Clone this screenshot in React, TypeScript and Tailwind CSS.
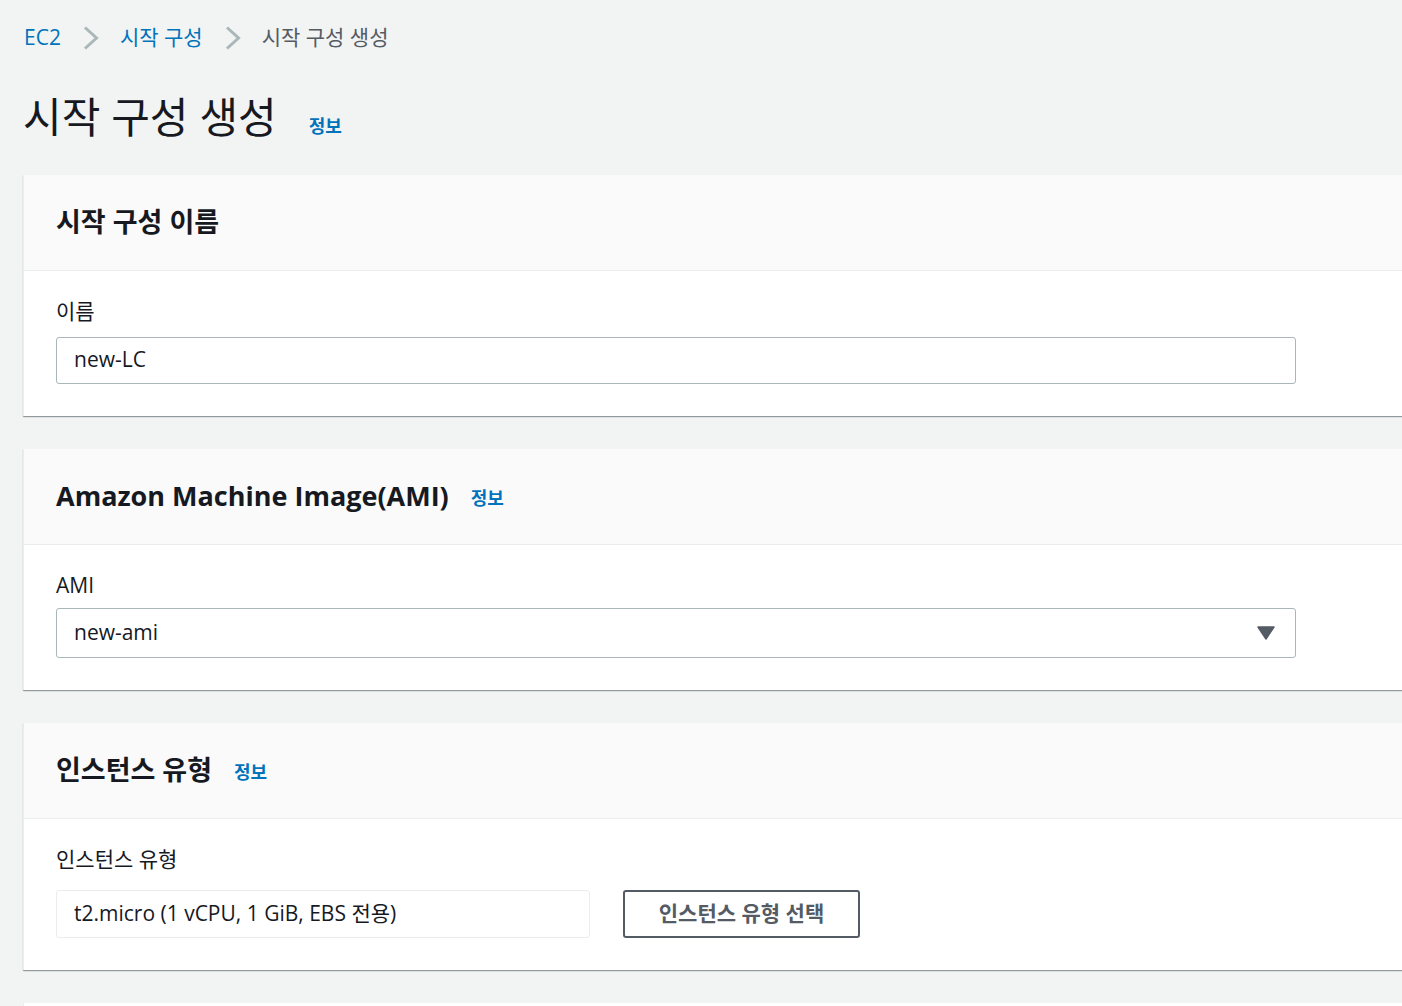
const font = {
  fontFamily: '"Open Sans", "Noto Sans CJK KR", sans-serif',
};

function Info({ className = "" }: { className?: string }) {
  return (
    <a className={`text-[18px] font-bold text-[#0073bb] ${className}`}>정보</a>
  );
}

function Chevron() {
  return (
    <svg width="16" height="24" viewBox="0 0 16 24" className="ml-[22px] mr-[21px]">
      <path d="M2 1.5 13.5 12 2 22.5" fill="none" stroke="#aab7b8" strokeWidth="3" />
    </svg>
  );
}

function Card({
  title,
  info,
  children,
}: {
  title: string;
  info?: boolean;
  children: React.ReactNode;
}) {
  return (
    <section className="w-[1440px] bg-white border-l border-[#eaeded] shadow-[0_1px_1px_0_rgba(0,28,36,0.3),1px_1px_1px_0_rgba(0,28,36,0.15)]">
      <header className="h-[96px] bg-[#fafafa] border-b border-[#eaeded] flex items-center pl-[32px]">
        <h2 className="text-[27px] font-bold text-[#16191f]">{title}</h2>
        {info && <Info className="ml-[22px] mt-[4px]" />}
      </header>
      <div className="pl-[32px] pt-[25px] pb-[32px]">{children}</div>
    </section>
  );
}

export default function App() {
  return (
    <div
      className="min-h-screen bg-[#f2f3f3] overflow-hidden pl-[23px] text-[#16191f]"
      style={font}
    >
      <nav className="flex items-center h-[38px] mt-[19px] text-[21px] pl-[1px]">
        <a className="text-[#0073bb]">EC2</a>
        <Chevron />
        <a className="text-[#0073bb]">시작 구성</a>
        <Chevron />
        <span className="text-[#545b64]">시작 구성 생성</span>
      </nav>
      <div className="flex items-center h-[58px] mt-[31px] mb-[29px]">
        <h1 className="text-[42px] text-[#16191f] leading-none">시작 구성 생성</h1>
        <Info className="ml-[32px] mt-[18px]" />
      </div>

      <div className="flex flex-col gap-[33px]">
        <Card title="시작 구성 이름">
          <label className="block text-[21px] mb-[9px]">이름</label>
          <div className="w-[1240px] h-[47px] border border-[#aab7b8] rounded-[3px] flex items-center px-[17px] text-[21px]">
            new-LC
          </div>
        </Card>

        <Card title="Amazon Machine Image(AMI)" info>
          <label className="block text-[21px] mb-[7px]">AMI</label>
          <div className="w-[1240px] h-[50px] border border-[#aab7b8] rounded-[3px] flex items-center justify-between pl-[17px] pr-[20px] text-[21px]">
            <span>new-ami</span>
            <svg width="18" height="14" viewBox="0 0 18 14">
              <path d="M1 1h16L9 13z" fill="#545b64" stroke="#545b64" strokeWidth="1.5" strokeLinejoin="round" />
            </svg>
          </div>
        </Card>

        <Card title="인스턴스 유형" info>
          <label className="block text-[21px] mb-[14px]">인스턴스 유형</label>
          <div className="flex items-center gap-[33px]">
            <div className="w-[534px] h-[48px] border border-[#eaeded] rounded-[3px] flex items-center px-[17px] text-[21px]">
              t2.micro (1 vCPU, 1 GiB, EBS 전용)
            </div>
            <button className="w-[237px] h-[48px] border-2 border-[#545b64] rounded-[3px] text-[21px] font-bold text-[#545b64]">
              인스턴스 유형 선택
            </button>
          </div>
        </Card>

        <section className="w-[1440px] h-[40px] bg-white border-l border-[#eaeded]" />
      </div>
    </div>
  );
}
